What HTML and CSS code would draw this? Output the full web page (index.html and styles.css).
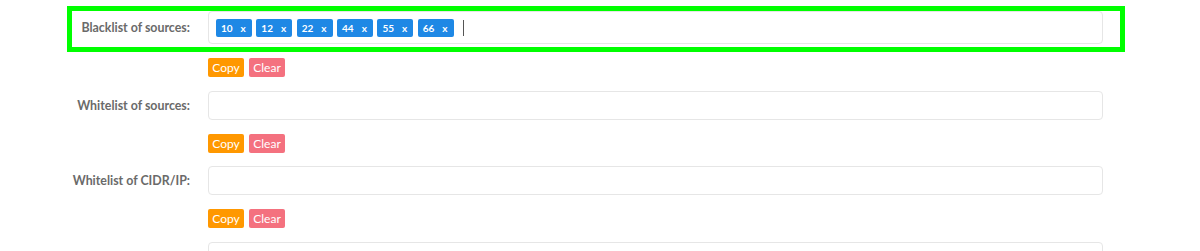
FILE: index.html
```html
<!DOCTYPE html>
<html lang="en">
<head>
    <meta charset="UTF-8">
    <title>Sources</title>
    <link rel="stylesheet" href="styles.css">
</head>
<body>
    <div class="form">
        <div class="group">
            <div class="field active">
                <label class="label">Blacklist of sources:</label>
                <div class="input tall">
                    <span class="tag">10<span class="x">x</span></span>
                    <span class="tag">12<span class="x">x</span></span>
                    <span class="tag">22<span class="x">x</span></span>
                    <span class="tag">44<span class="x">x</span></span>
                    <span class="tag">55<span class="x">x</span></span>
                    <span class="tag">66<span class="x">x</span></span>
                    <span class="caret"></span>
                </div>
            </div>
            <div class="actions">
                <button class="copy">Copy</button>
                <button class="clear">Clear</button>
            </div>
        </div>
        <div class="group">
            <div class="field">
                <label class="label">Whitelist of sources:</label>
                <div class="input"></div>
            </div>
            <div class="actions">
                <button class="copy">Copy</button>
                <button class="clear">Clear</button>
            </div>
        </div>
        <div class="group">
            <div class="field">
                <label class="label">Whitelist of CIDR/IP:</label>
                <div class="input"></div>
            </div>
            <div class="actions">
                <button class="copy">Copy</button>
                <button class="clear">Clear</button>
            </div>
        </div>
        <div class="group">
            <div class="field">
                <label class="label"></label>
                <div class="input"></div>
            </div>
        </div>
    </div>
</body>
</html>
```

FILE: styles.css
```css
body {
    margin: 0;
    background: #fff;
    font-family: Lato, "Open Sans", sans-serif;
}
.form {
    padding-top: 6px;
    width: 1058px;
    margin-left: 67px;
}
.field {
    display: flex;
    align-items: center;
    border: 5px solid transparent;
    padding-bottom: 3px;
    padding-right: 17px;
}
.field.active {
    border-color: #00ff00;
}
.label {
    width: 118px;
    flex: none;
    text-align: right;
    margin-right: 18px;
    font-size: 12.4px;
    font-weight: 700;
    color: #6a6a6a;
}
.input {
    flex: 1;
    height: 29px;
    box-sizing: border-box;
    border: 1px solid #e6e6e6;
    border-radius: 4px;
    display: flex;
    align-items: center;
    padding-left: 7px;
}
.input.tall {
    height: 33px;
}
.tag {
    display: inline-flex;
    align-items: center;
    height: 18px;
    padding: 0 6px 0 5px;
    margin-right: 4.5px;
    background: #1e88e5;
    color: #fff;
    font-size: 10px;
    font-weight: 700;
    border-radius: 2px;
}
.tag .x {
    margin-left: 8px;
}
.caret {
    width: 1px;
    height: 16px;
    margin-left: 5px;
    background: #555;
}
.actions {
    display: flex;
    gap: 5px;
    margin-top: 6px;
    margin-bottom: 8.5px;
    padding-left: 141px;
}
.actions button {
    height: 19px;
    width: 36px;
    padding: 0;
    border: none;
    border-radius: 2px;
    color: #fff;
    font-family: Lato, "Open Sans", sans-serif;
    font-size: 12px;
}
.copy { background: #ff9800; }
.clear { background: #f4717f; }
```
